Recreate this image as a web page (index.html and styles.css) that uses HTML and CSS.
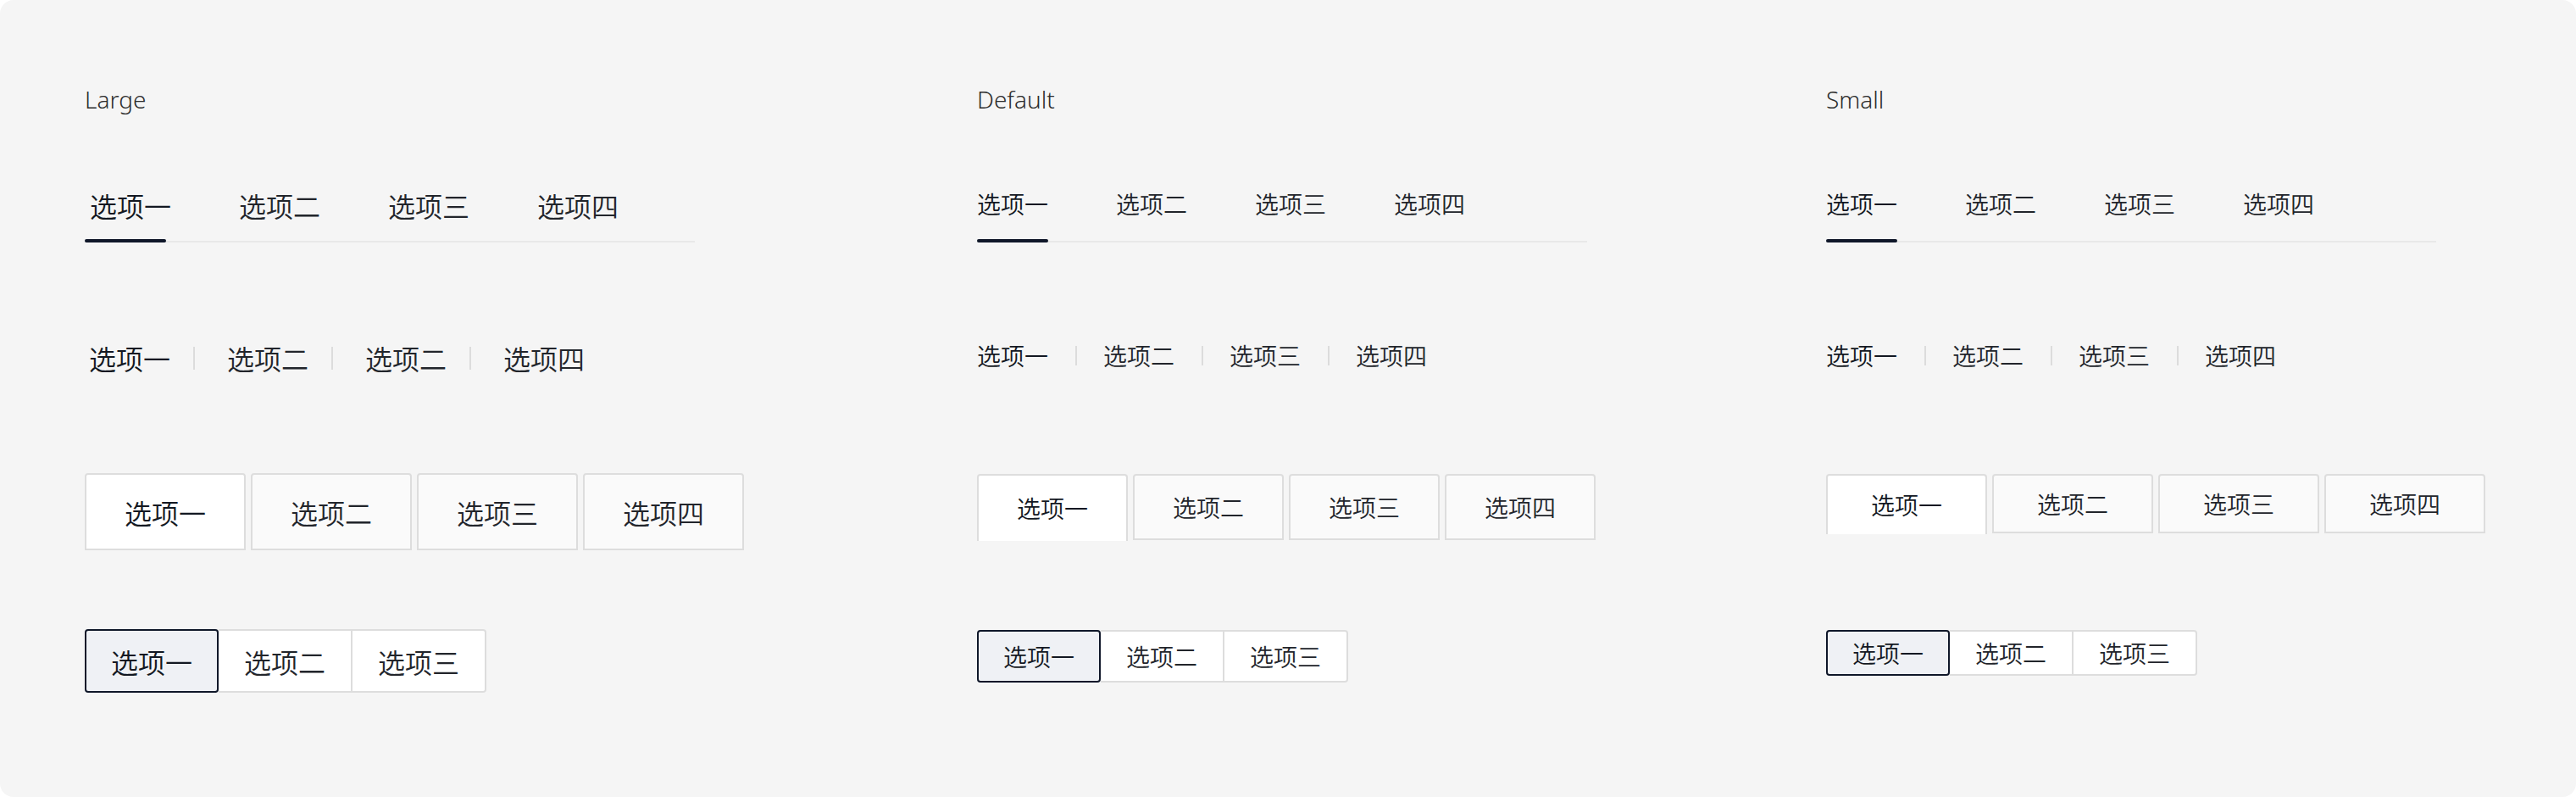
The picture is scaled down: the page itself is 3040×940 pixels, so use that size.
FILE: index.html
```html
<!DOCTYPE html>
<html lang="zh-CN">
<head>
<meta charset="utf-8">
<title>Tabs</title>
<link rel="stylesheet" href="styles.css">
</head>
<body>
<main class="page">
  <section class="col col-lg">
    <h2 class="title">Large</h2>
    <nav class="tabs tabs-lg">
      <div class="tab active">选项一</div>
      <div class="tab">选项二</div>
      <div class="tab">选项三</div>
      <div class="tab">选项四</div>
    </nav>
    <div class="split split-lg">
      <span class="split-item active">选项一</span><i class="sep"></i>
      <span class="split-item">选项二</span><i class="sep"></i>
      <span class="split-item">选项二</span><i class="sep"></i>
      <span class="split-item">选项四</span>
    </div>
    <div class="cards cards-lg">
      <div class="card active">选项一</div>
      <div class="card">选项二</div>
      <div class="card">选项三</div>
      <div class="card">选项四</div>
    </div>
    <div class="segmented seg-lg">
      <div class="seg active">选项一</div>
      <div class="seg">选项二</div>
      <div class="seg">选项三</div>
    </div>
  </section>

  <section class="col col-md">
    <h2 class="title">Default</h2>
    <nav class="tabs tabs-md">
      <div class="tab active">选项一</div>
      <div class="tab">选项二</div>
      <div class="tab">选项三</div>
      <div class="tab">选项四</div>
    </nav>
    <div class="split split-md">
      <span class="split-item active">选项一</span><i class="sep"></i>
      <span class="split-item">选项二</span><i class="sep"></i>
      <span class="split-item">选项三</span><i class="sep"></i>
      <span class="split-item">选项四</span>
    </div>
    <div class="cards cards-md">
      <div class="card active">选项一</div>
      <div class="card">选项二</div>
      <div class="card">选项三</div>
      <div class="card">选项四</div>
    </div>
    <div class="segmented seg-md">
      <div class="seg active">选项一</div>
      <div class="seg">选项二</div>
      <div class="seg">选项三</div>
    </div>
  </section>

  <section class="col col-sm">
    <h2 class="title">Small</h2>
    <nav class="tabs tabs-sm">
      <div class="tab active">选项一</div>
      <div class="tab">选项二</div>
      <div class="tab">选项三</div>
      <div class="tab">选项四</div>
    </nav>
    <div class="split split-sm">
      <span class="split-item active">选项一</span><i class="sep"></i>
      <span class="split-item">选项二</span><i class="sep"></i>
      <span class="split-item">选项三</span><i class="sep"></i>
      <span class="split-item">选项四</span>
    </div>
    <div class="cards cards-sm">
      <div class="card active">选项一</div>
      <div class="card">选项二</div>
      <div class="card">选项三</div>
      <div class="card">选项四</div>
    </div>
    <div class="segmented seg-sm">
      <div class="seg active">选项一</div>
      <div class="seg">选项二</div>
      <div class="seg">选项三</div>
    </div>
  </section>
</main>
</body>
</html>
```

FILE: styles.css
```css
html, body {
  margin: 0;
  padding: 0;
  background: #ffffff;
}

.page {
  width: 3040px;
  height: 940px;
  box-sizing: border-box;
  background: #f5f5f5;
  border-radius: 16px;
  padding: 97px 0 0 100px;
  display: grid;
  grid-template-columns: 1053px 1002px 1fr;
  font-family: "Noto Sans", "Noto Sans CJK SC", sans-serif;
  color: #1d2027;
}

.col {
  display: grid;
  grid-template-rows: 103px 180px 160px 180px auto;
  align-items: start;
  justify-items: start;
}

.title {
  margin: 0;
  font-size: 28px;
  line-height: 40px;
  font-weight: 300;
  color: #2e2e2e;
}

/* ---------- line tabs ---------- */
.tabs {
  display: flex;
  width: 720px;
  border-bottom: 2px solid #e8e8e8;
  font-family: "Noto Sans CJK SC", sans-serif;
  font-weight: 350;
}

.tab {
  position: relative;
  color: #22252b;
}

.tab.active {
  color: #131822;
}

.tab.active::after {
  content: "";
  position: absolute;
  left: 0;
  bottom: -2px;
  height: 4px;
  border-radius: 2px;
  background: #0f1729;
}

.tabs-lg {
  margin-top: 18px;
}

.tabs-lg .tab {
  font-size: 32px;
  line-height: 48px;
  padding: 0 0 18px 6px;
  margin-right: 74px;
}

.tabs-lg .tab.active::after {
  width: 96px;
}

.tabs-md,
.tabs-sm {
  margin-top: 20px;
}

.tabs-md .tab,
.tabs-sm .tab {
  font-size: 28px;
  line-height: 40px;
  padding-bottom: 24px;
  margin-right: 80px;
}

.tabs-md .tab.active::after,
.tabs-sm .tab.active::after {
  width: 84px;
}

/* ---------- split (divider) tabs ---------- */
.split {
  display: flex;
  align-items: center;
  font-family: "Noto Sans CJK SC", sans-serif;
  font-weight: 350;
}

.split-item {
  color: #22252b;
}

.split-item.active {
  color: #131822;
}

.sep {
  display: block;
  width: 2px;
  background: #dcdcdc;
}

.split-lg {
  margin-top: 18px;
}

.split-lg .split-item {
  font-size: 32px;
  line-height: 48px;
}

.split-lg .split-item:first-child {
  padding-left: 5px;
}

.split-lg .sep {
  height: 27px;
  margin: 0 38px 0 27px;
}

.split-md,
.split-sm {
  margin-top: 19px;
}

.split-md .split-item,
.split-sm .split-item {
  font-size: 28px;
  line-height: 40px;
}

.split-md .sep,
.split-sm .sep {
  height: 23px;
  margin: 0 31px 0 32px;
}

/* ---------- card tabs ---------- */
.cards {
  display: flex;
  align-items: flex-start;
  gap: 6px;
  font-family: "Noto Sans CJK SC", sans-serif;
  font-weight: 350;
}

.card {
  box-sizing: border-box;
  border: 2px solid #dddddd;
  border-radius: 4px 4px 0 0;
  background: #fafafa;
  display: flex;
  align-items: center;
  justify-content: center;
  color: #22252b;
}

.card.active {
  background: #ffffff;
  color: #131822;
}

.cards-lg {
  margin-top: 18px;
}

.cards-lg .card {
  width: 190px;
  height: 91px;
  font-size: 32px;
}

.cards-md,
.cards-sm {
  margin-top: 19px;
}

.cards-md .card {
  width: 178px;
  height: 78px;
  font-size: 28px;
}

.cards-sm .card {
  width: 190px;
  height: 70px;
  font-size: 28px;
}

.cards-md .card.active,
.cards-sm .card.active {
  border-bottom: none;
  padding-bottom: 1px;
}

.cards-md .card.active {
  height: 79px;
}

.cards-sm .card.active {
  height: 71px;
}

/* ---------- segmented ---------- */
.segmented {
  display: flex;
  font-family: "Noto Sans CJK SC", sans-serif;
  font-weight: 350;
}

.seg {
  box-sizing: border-box;
  border: 2px solid #dddddd;
  border-left: none;
  background: #ffffff;
  display: flex;
  align-items: center;
  justify-content: center;
  color: #22252b;
}

.seg:last-child {
  border-radius: 0 4px 4px 0;
}

.seg.active {
  border: 2px solid #0f1729;
  border-radius: 4px;
  background: #eff1f5;
  color: #131822;
}

.seg-lg {
  margin-top: 22px;
}

.seg-lg .seg {
  width: 158px;
  height: 75px;
  font-size: 32px;
}

.seg-md,
.seg-sm {
  margin-top: 23px;
}

.seg-md .seg {
  width: 146px;
  height: 62px;
  font-size: 28px;
}

.seg-sm .seg {
  width: 146px;
  height: 54px;
  font-size: 28px;
}
```
